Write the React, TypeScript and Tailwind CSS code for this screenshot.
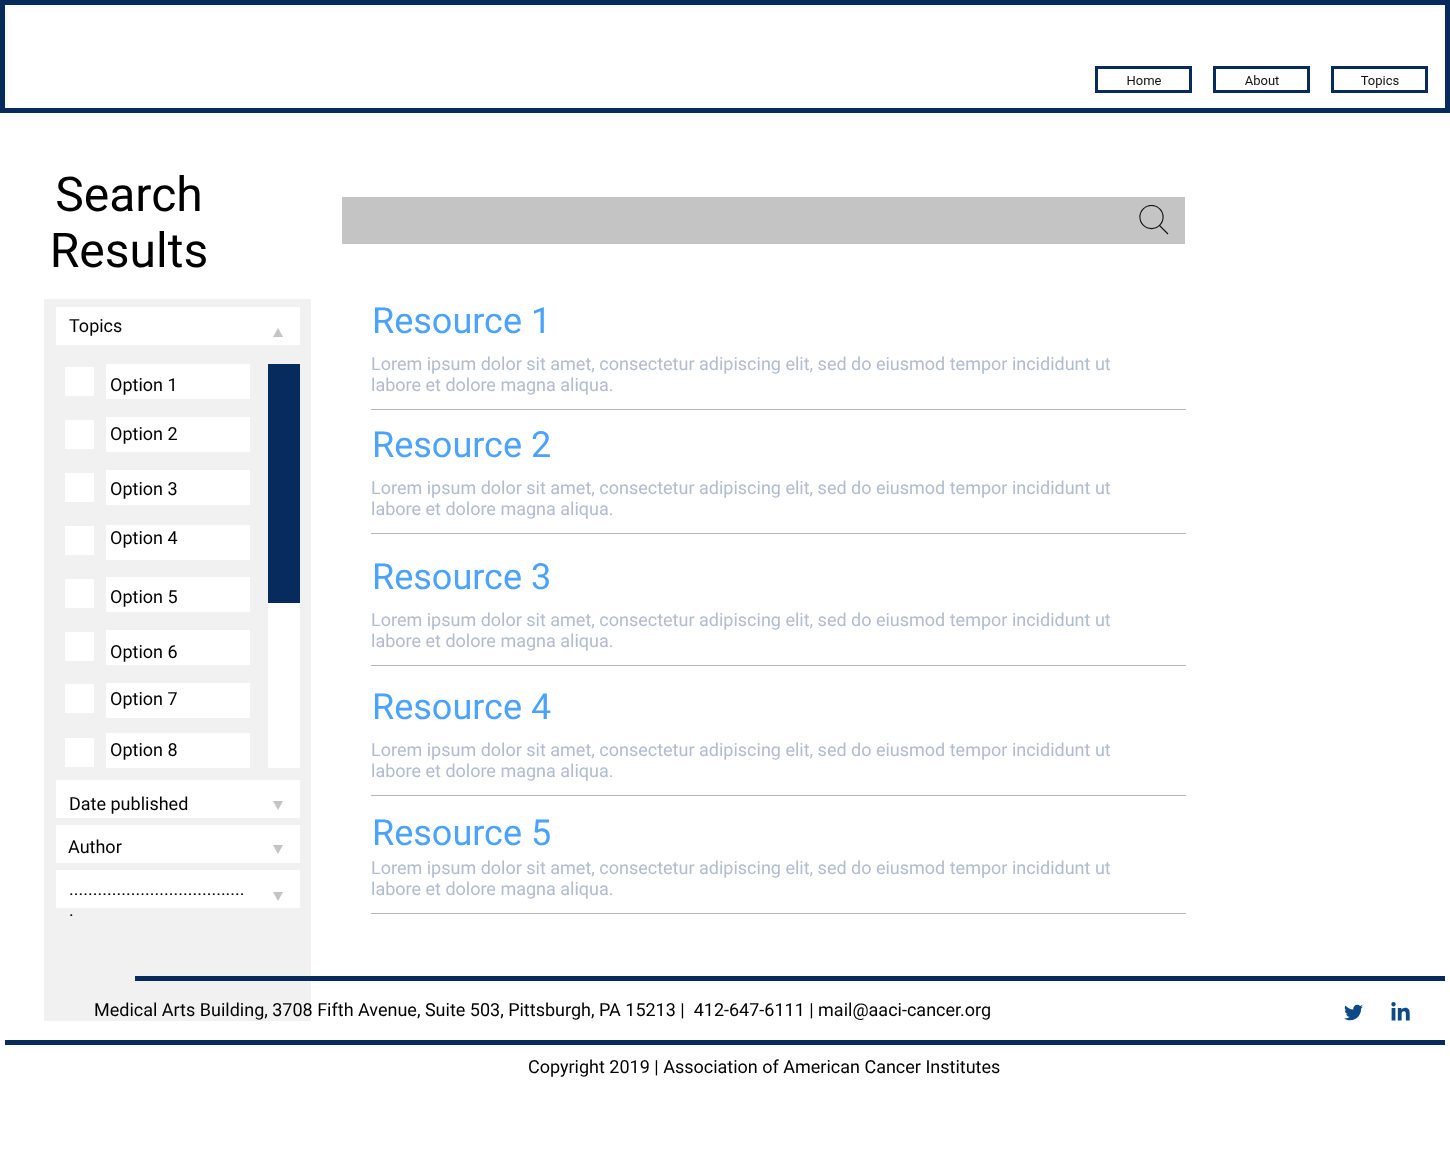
import { FaLinkedinIn, FaTwitter } from "react-icons/fa";

const navItems = ["Home", "About", "Topics"];

const options = [
  { label: "Option 1", box: "mt-0", check: "mt-[3px]", text: "pt-[11px]" },
  { label: "Option 2", box: "mt-[18px]", check: "mt-[3px]", text: "pt-[7px]" },
  { label: "Option 3", box: "mt-[18px]", check: "mt-[3px]", text: "pt-[9px]" },
  { label: "Option 4", box: "mt-[20px]", check: "mt-[1px]", text: "pt-[3px]" },
  { label: "Option 5", box: "mt-[17px]", check: "mt-[2px]", text: "pt-[10px]" },
  { label: "Option 6", box: "mt-[18px]", check: "mt-[2px]", text: "pt-[12px]" },
  { label: "Option 7", box: "mt-[18px]", check: "mt-[1px]", text: "pt-[6px]" },
  { label: "Option 8", box: "mt-[15px]", check: "mt-[5px]", text: "pt-[7px]" },
];

const resources = [
  { title: "Resource 1", top: "pt-[1px]", gap: "mt-[12px]" },
  { title: "Resource 2", top: "pt-[14px]", gap: "mt-[12px]" },
  { title: "Resource 3", top: "pt-[22px]", gap: "mt-[12px]" },
  { title: "Resource 4", top: "pt-[20px]", gap: "mt-[12px]" },
  { title: "Resource 5", top: "pt-[16px]", gap: "mt-[4px]" },
];

const Caret = ({ up = false, top = "top-[21px]" }: { up?: boolean; top?: string }) => (
  <svg width="10" height="9" viewBox="0 0 10 9" className={`absolute right-[17px] ${top}`}>
    <polygon points={up ? "5,0 10,9 0,9" : "0,0 10,0 5,9"} fill="#c4c4c4" />
  </svg>
);

const Sidebar = () => (
  <aside className="h-[722px] w-[267px] bg-[#f1f1f1] pl-[12px] pr-[11px] pt-[8px] text-[18px] leading-[21px] text-black">
    <div className="relative h-[38px] bg-white pl-[13px] pt-[9px]">
      Topics
      <Caret up />
    </div>
    <div className="mt-[19px] flex h-[404px] justify-between">
      <div className="pl-[9px]">
        {options.map((o) => (
          <div key={o.label} className={`flex ${o.box}`}>
            <div className={`h-[29px] w-[29px] bg-white ${o.check}`} />
            <div className={`ml-[12px] h-[35px] w-[144px] bg-white pl-[4px] ${o.text}`}>{o.label}</div>
          </div>
        ))}
      </div>
      <div className="w-[32px] bg-white">
        <div className="h-[239px] bg-[#082b5e]" />
      </div>
    </div>
    <div className="relative mt-[12px] h-[38px] bg-white pl-[13px] pt-[14px]">
      Date published
      <Caret />
    </div>
    <div className="relative mt-[7px] h-[38px] bg-white pl-[12px] pt-[12px]">
      Author
      <Caret top="top-[20px]" />
    </div>
    <div className="relative mt-[7px] h-[38px] bg-white pl-[13px] pt-[9px]">
      .....................................
      <br />.
      <Caret top="top-[22px]" />
    </div>
  </aside>
);

export default function App() {
  return (
    <div className="h-[1156px] font-[family-name:Roboto,sans-serif] [text-rendering:geometricPrecision] [will-change:transform]">
      <header className="flex h-[113px] items-end justify-end gap-[21px] border-[5px] border-[#082b5e] pb-[15px] pr-[17px]">
        {navItems.map((item) => (
          <button
            key={item}
            className="h-[27px] w-[97px] border-[3px] border-[#082b5e] pl-[1px] pt-[1px] text-[13px] leading-[15px] text-[#111]"
          >
            {item}
          </button>
        ))}
      </header>

      <main className="flex h-[863px] pl-[44px]">
        <div className="w-[267px]">
          <h1 className="h-[186px] w-[170px] pt-[54px] text-center text-[48px] font-normal leading-[56px] text-black">
            Search Results
          </h1>
          <Sidebar />
        </div>

        <div className="ml-[31px] w-[844px]">
          <div className="mt-[84px] flex h-[47px] w-[843px] items-start justify-end bg-[#c4c4c4] pr-[16px] pt-[8px]">
            <svg width="31" height="31" viewBox="0 0 31 31" fill="none" stroke="#111" strokeWidth="1.1">
              <circle cx="13.5" cy="12" r="11.6" />
              <path d="M21.5 20.5l8.5 8.5" />
            </svg>
          </div>
          <div className="mt-[55px] pl-[29px]">
            {resources.map((r) => (
              <section key={r.title} className={`w-[815px] border-b border-[#b5b5b5] pb-[13px] ${r.top}`}>
                <h2 className="pl-[1px] text-[36px] font-normal leading-[42px] text-[#4ca2ff]">{r.title}</h2>
                <p className={`w-[760px] text-[18px] leading-[21px] text-[#b1bccf] ${r.gap}`}>
                  Lorem ipsum dolor sit amet, consectetur adipiscing elit, sed do eiusmod tempor incididunt ut labore et
                  dolore magna aliqua.
                </p>
              </section>
            ))}
          </div>
        </div>
      </main>

      <footer className="relative text-[18px] leading-[21px] text-black">
        <div className="ml-[135px] mr-[5px] h-[5px] bg-[#082b5e]" />
        <div className="flex h-[59px] items-center justify-between pl-[94px] pr-[39px]">
          <p className="whitespace-pre">
            Medical Arts Building, 3708 Fifth Avenue, Suite 503, Pittsburgh, PA 15213 |  412-647-6111 | mail@aaci-cancer.org
          </p>
          <div className="flex items-center gap-[27px] pt-[3px] text-[#0b4a84]">
            <FaTwitter className="text-[19px]" />
            <FaLinkedinIn className="text-[21px]" />
          </div>
        </div>
        <div className="mx-[5px] h-[5px] bg-[#082b5e]" />
        <p className="pl-[528px] pt-[12px]">Copyright 2019 | Association of American Cancer Institutes</p>
      </footer>
    </div>
  );
}
